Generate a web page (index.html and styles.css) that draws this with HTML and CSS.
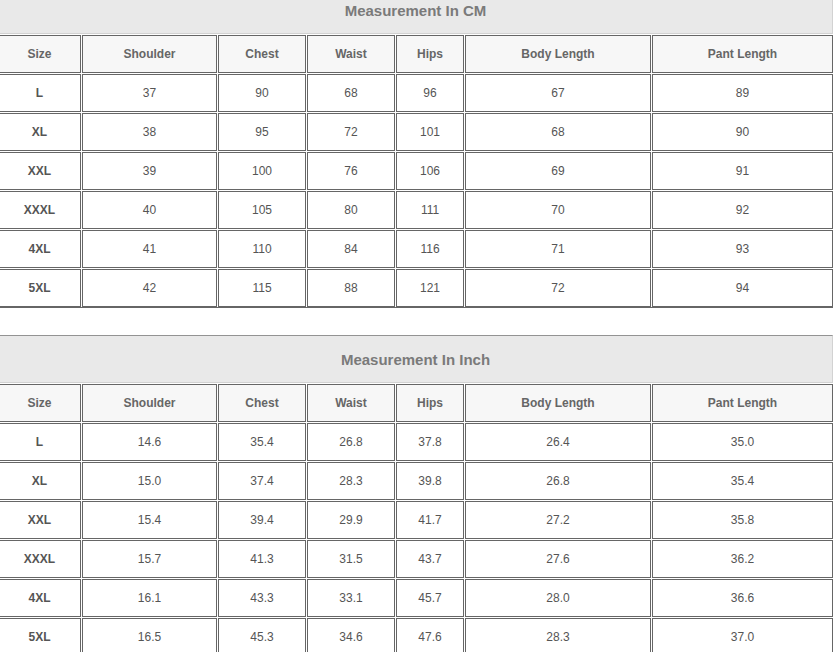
FILE: index.html
```html
<!DOCTYPE html>
<html>
<head>
<meta charset="utf-8">
<link rel="stylesheet" href="styles.css">
</head>
<body>
<div class="page">
  <div class="chart">
    <div class="title">Measurement In CM</div>
    <div class="hd">Size</div><div class="hd">Shoulder</div><div class="hd">Chest</div><div class="hd">Waist</div><div class="hd">Hips</div><div class="hd">Body Length</div><div class="hd">Pant Length</div>
    <div class="sz">L</div><div class="c">37</div><div class="c">90</div><div class="c">68</div><div class="c">96</div><div class="c">67</div><div class="c">89</div>
    <div class="sz">XL</div><div class="c">38</div><div class="c">95</div><div class="c">72</div><div class="c">101</div><div class="c">68</div><div class="c">90</div>
    <div class="sz">XXL</div><div class="c">39</div><div class="c">100</div><div class="c">76</div><div class="c">106</div><div class="c">69</div><div class="c">91</div>
    <div class="sz">XXXL</div><div class="c">40</div><div class="c">105</div><div class="c">80</div><div class="c">111</div><div class="c">70</div><div class="c">92</div>
    <div class="sz">4XL</div><div class="c">41</div><div class="c">110</div><div class="c">84</div><div class="c">116</div><div class="c">71</div><div class="c">93</div>
    <div class="sz">5XL</div><div class="c">42</div><div class="c">115</div><div class="c">88</div><div class="c">121</div><div class="c">72</div><div class="c">94</div>
  </div>
  <div class="chart">
    <div class="title">Measurement In Inch</div>
    <div class="hd">Size</div><div class="hd">Shoulder</div><div class="hd">Chest</div><div class="hd">Waist</div><div class="hd">Hips</div><div class="hd">Body Length</div><div class="hd">Pant Length</div>
    <div class="sz">L</div><div class="c">14.6</div><div class="c">35.4</div><div class="c">26.8</div><div class="c">37.8</div><div class="c">26.4</div><div class="c">35.0</div>
    <div class="sz">XL</div><div class="c">15.0</div><div class="c">37.4</div><div class="c">28.3</div><div class="c">39.8</div><div class="c">26.8</div><div class="c">35.4</div>
    <div class="sz">XXL</div><div class="c">15.4</div><div class="c">39.4</div><div class="c">29.9</div><div class="c">41.7</div><div class="c">27.2</div><div class="c">35.8</div>
    <div class="sz">XXXL</div><div class="c">15.7</div><div class="c">41.3</div><div class="c">31.5</div><div class="c">43.7</div><div class="c">27.6</div><div class="c">36.2</div>
    <div class="sz">4XL</div><div class="c">16.1</div><div class="c">43.3</div><div class="c">33.1</div><div class="c">45.7</div><div class="c">28.0</div><div class="c">36.6</div>
    <div class="sz">5XL</div><div class="c">16.5</div><div class="c">45.3</div><div class="c">34.6</div><div class="c">47.6</div><div class="c">28.3</div><div class="c">37.0</div>
  </div>
</div>
</body>
</html>
```

FILE: styles.css
```css
html, body {
  margin: 0;
  padding: 0;
  background: #ffffff;
  overflow: hidden;
}

.page {
  margin: -14px 0 0 -2px;
  width: 835px;
  font-family: "Liberation Sans", Arial, sans-serif;
}

.chart {
  display: grid;
  grid-template-columns: 83px 135px 88px 88px 68px 186px 181px;
  grid-auto-rows: 38px;
  gap: 1px;
  border-bottom: 1px solid #666666;
  margin-bottom: 27px;
}

.chart > div {
  box-sizing: border-box;
  display: flex;
  align-items: center;
  justify-content: center;
  border: 1px solid #666666;
}

.chart > .title {
  grid-column: 1 / -1;
  height: 48px;
  align-self: start;
  background: #e9e9e9;
  border-color: #939393 #d2d2d2 #d2d2d2 #939393;
  color: #7a7a7a;
  font-size: 15px;
  font-weight: bold;
}

.chart {
  grid-template-rows: 48px;
}

.hd {
  background: #f7f7f7;
  color: #666666;
  font-size: 12px;
  font-weight: bold;
}

.sz {
  background: #ffffff;
  color: #555555;
  font-size: 12px;
  font-weight: bold;
}

.c {
  background: #ffffff;
  color: #555555;
  font-size: 12px;
}
```
